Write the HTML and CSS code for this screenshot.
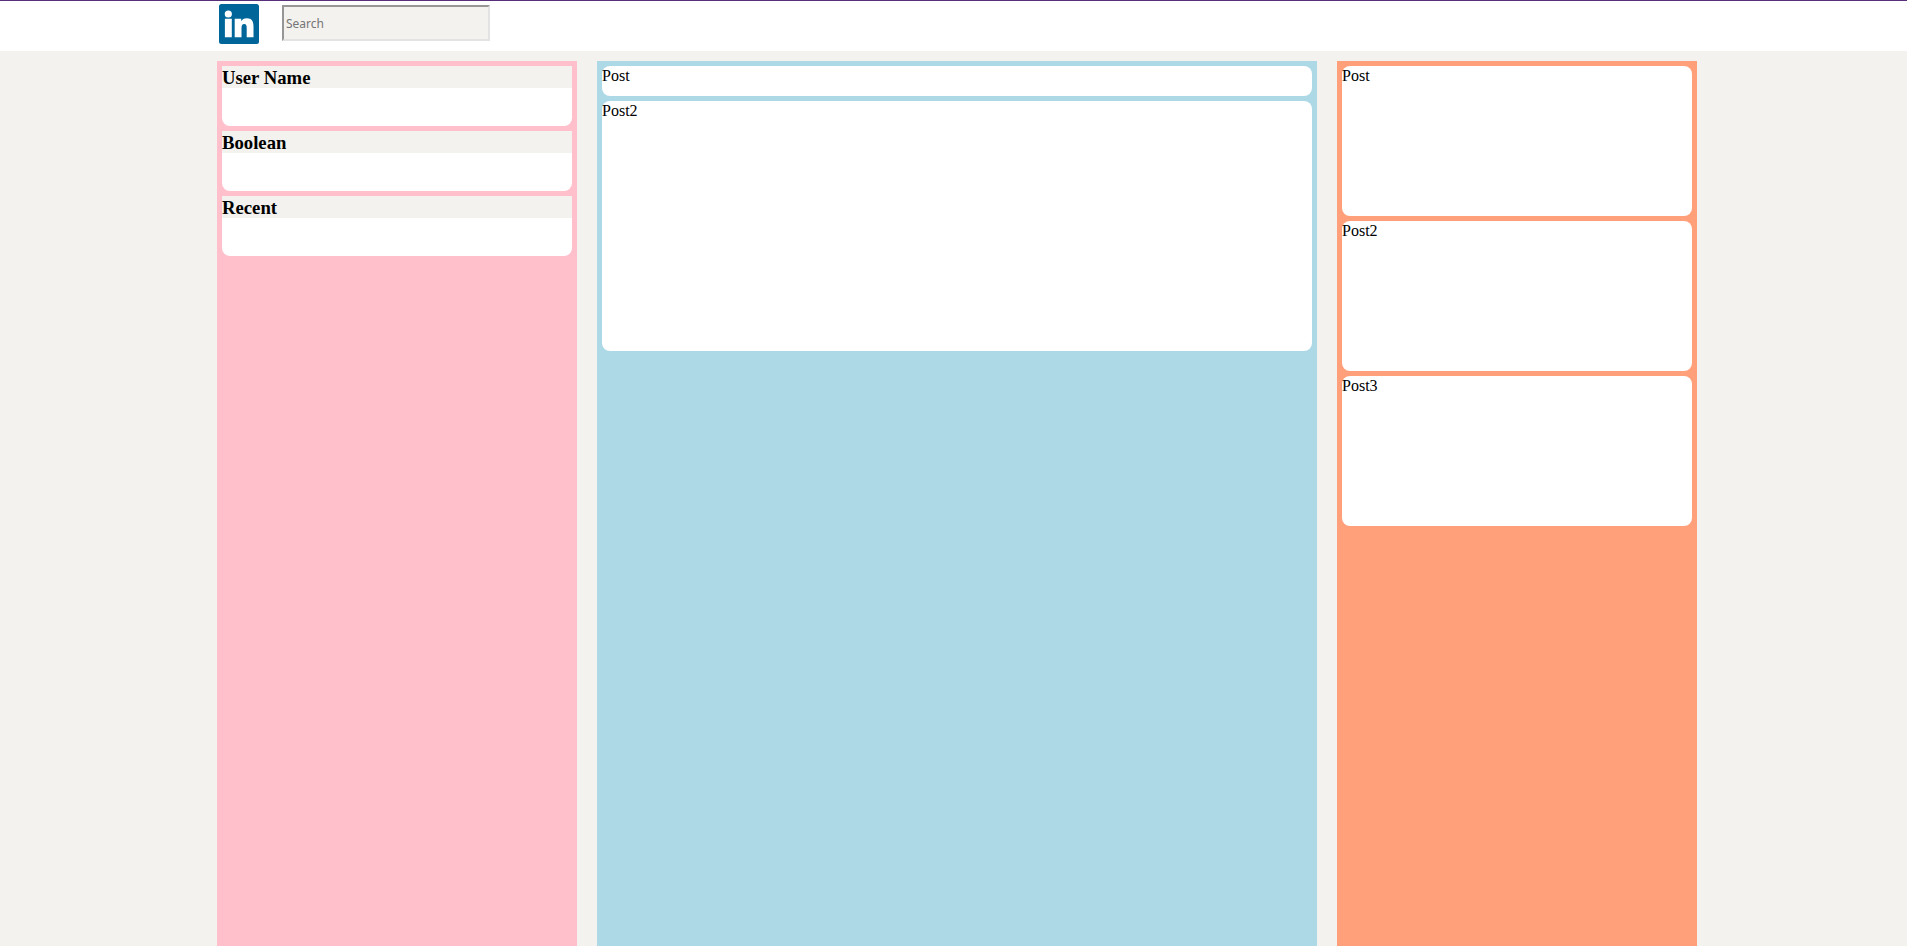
FILE: index.html
```html
<!DOCTYPE html>
<html lang="en">
<head>
<meta charset="utf-8">
<title>LinkedIn</title>
<link rel="stylesheet" href="styles.css">
</head>
<body>
<header class="navbar">
  <div class="container navbar-inner">
    <svg class="logo" viewBox="0 0 40 40" role="img" aria-label="LinkedIn">
      <rect width="40" height="40" rx="2.500" fill="#006699"/>
      <circle cx="9.300" cy="10" r="3.600" fill="#fff"/>
      <path fill="#fff" d="M5.900 14.800h6.900v18.500H5.900zM15.700 14.800h6.500v2.400c1-1.700 2.900-2.900 5.500-2.900 5.300 0 6.800 3.500 6.800 8.300v10.700h-6.800v-9.300c0-2.200-.3-4-2.500-4s-2.700 1.800-2.700 4v9.300h-6.800z"/>
    </svg>
    <input class="search" type="text" placeholder="Search" aria-label="Search">
  </div>
</header>
<main class="container columns">
  <aside class="column profile">
    <section class="card card-small"><h3 class="card-title">User Name</h3></section>
    <section class="card card-small"><h3 class="card-title">Boolean</h3></section>
    <section class="card card-small"><h3 class="card-title">Recent</h3></section>
  </aside>
  <section class="column feed">
    <article class="card card-line">Post</article>
    <article class="card card-large">Post2</article>
  </section>
  <aside class="column news">
    <article class="card card-medium">Post</article>
    <article class="card card-medium">Post2</article>
    <article class="card card-medium">Post3</article>
  </aside>
</main>
</body>
</html>
```
FILE: styles.css
```css
* {
  box-sizing: border-box;
}

body {
  margin: 0;
  min-height: 100vh;
  display: flex;
  flex-direction: column;
  background: #f3f2ee;
  color: #000;
  font-family: "Liberation Serif", "Times New Roman", serif;
  font-size: 16px;
  line-height: 20px;
}

.container {
  width: 100%;
  max-width: 1487px;
  margin: 0 auto;
  padding-left: 7px;
}

.navbar {
  background: #fff;
  border-top: 1px solid #56307a;
}

.navbar-inner {
  display: flex;
  align-items: flex-start;
  gap: 23px;
  min-height: 50px;
  padding-top: 3px;
}

.logo {
  width: 40px;
  height: 40px;
  margin-left: 2px;
}

.search {
  width: 208px;
  height: 36px;
  margin-top: 1px;
  padding: 1px 2px;
  border: 2px solid;
  border-color: #969696 #e3e3e3 #e3e3e3 #969696;
  background: #f3f2ee;
  font-family: "Noto Sans", sans-serif;
  font-size: 12px;
}

.search::placeholder {
  color: #757575;
}

.columns {
  flex: 1;
  display: grid;
  grid-template-columns: 1fr 2fr 1fr;
  gap: 20px;
  margin-top: 10px;
}

.column {
  display: flex;
  flex-direction: column;
  gap: 5px;
  padding: 5px;
}

.profile {
  background: pink;
}

.feed {
  background: lightblue;
}

.news {
  background: lightsalmon;
}

.card {
  background: #fff;
  border-radius: 8px;
}

.card-title {
  margin: 0;
  padding-top: 2px;
  background: #f3f2ee;
  line-height: 20px;
}

.card-small {
  min-height: 60px;
}

.card-line {
  min-height: 30px;
}

.card-medium {
  min-height: 150px;
}

.card-large {
  min-height: 250px;
}
```
